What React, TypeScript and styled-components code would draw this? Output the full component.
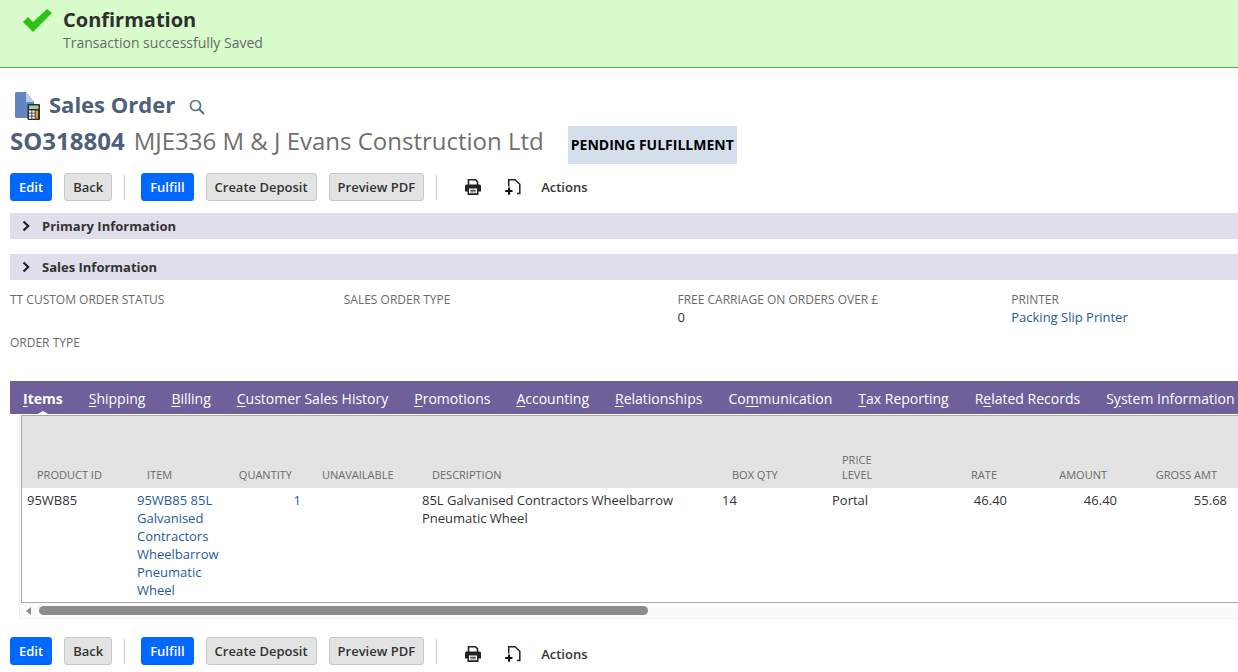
import React from "react";
import styled, { createGlobalStyle } from "styled-components";

const Global = createGlobalStyle`
  html, body { margin: 0; padding: 0; background: #fff; overflow: hidden; }
  body { font-family: "Open Sans", "Liberation Sans", sans-serif; font-size: 13px; color: #333; }
`;

const Page = styled.div`
  width: 1238px;
  height: 672px;
  overflow: hidden;
`;

const Banner = styled.div`
  height: 67px;
  background: #d8fccb;
  border-bottom: 1px solid #3dbb2c;
  display: flex;
  padding-left: 23px;
`;

const BannerIcon = styled.svg`
  width: 30px;
  height: 26px;
  margin-top: 8px;
  flex: none;
`;

const BannerText = styled.div`
  margin-left: 10px;
  padding-top: 8px;
`;

const BannerTitle = styled.div`
  font-size: 20px;
  line-height: 24px;
  font-weight: 700;
  color: #2f2f2f;
`;

const BannerSub = styled.div`
  font-size: 14px;
  line-height: 20px;
  margin-top: 1px;
  color: #6a6a6a;
`;

const Content = styled.div`
  padding-left: 10px;
`;

const TitleRow = styled.div`
  display: flex;
  align-items: center;
  height: 30px;
  margin-top: 21px;
  padding-left: 5px;
`;

const RecordIcon = styled.svg`
  width: 25px;
  height: 28px;
  margin-top: 4px;
  flex: none;
`;

const TitleText = styled.span`
  font-size: 22px;
  font-weight: 700;
  color: #4d5f7d;
  margin-left: 9px;
`;

const SearchIcon = styled.svg`
  width: 16px;
  height: 16px;
  margin-left: 14px;
  margin-top: 6px;
`;

const RecordRow = styled.div`
  display: flex;
  align-items: center;
  height: 38px;
  margin-top: 7px;
`;

const RecordId = styled.span`
  font-size: 24px;
  font-weight: 700;
  color: #4d5f7d;
  margin-bottom: 10px;
`;

const RecordName = styled.span`
  font-size: 24px;
  color: #6f6f6f;
  margin-left: 9px;
  margin-bottom: 10px;
`;

const Status = styled.span`
  margin-left: 24px;
  height: 38px;
  line-height: 38px;
  padding: 0 3px;
  background: #d5dfec;
  font-size: 14px;
  font-weight: 700;
  color: #000;
`;

const Toolbar = styled.div<{ $top: number }>`
  display: flex;
  align-items: center;
  height: 28px;
  margin-top: ${(p) => p.$top}px;
`;

const Btn = styled.button<{ $primary?: boolean; $gap?: number }>`
  height: 28px;
  box-sizing: border-box;
  padding: 0 8px;
  margin-left: ${(p) => p.$gap ?? 0}px;
  border-radius: 3px;
  font-family: inherit;
  font-size: 13px;
  font-weight: 600;
  cursor: pointer;
  border: 1px solid ${(p) => (p.$primary ? "#0067ff" : "#c8c8c8")};
  background: ${(p) => (p.$primary ? "#0067ff" : "#e3e3e3")};
  color: ${(p) => (p.$primary ? "#fff" : "#333")};
`;

const Divider = styled.div`
  width: 1px;
  height: 25px;
  background: #cfcfcf;
  margin-left: 12px;
  margin-right: 16px;
  flex: none;
`;

const ToolIcon = styled.svg<{ $gap: number; $drop: number }>`
  width: 18px;
  height: 18px;
  margin-left: ${(p) => p.$gap}px;
  margin-top: ${(p) => p.$drop * 2}px;
  flex: none;
`;

const ActionsLabel = styled.span<{ $drop: number }>`
  margin-left: 19px;
  margin-top: ${(p) => p.$drop * 2}px;
  font-size: 13px;
  font-weight: 600;
  color: #333;
`;

const Section = styled.div<{ $top: number }>`
  height: 26px;
  margin-top: ${(p) => p.$top}px;
  background: #e0deea;
  display: flex;
  align-items: center;
  padding-left: 11px;
  font-size: 13px;
  font-weight: 700;
  color: #333;
`;

const Chevron = styled.svg`
  width: 10px;
  height: 12px;
  margin-right: 11px;
`;

const Fields = styled.div`
  display: grid;
  grid-template-columns: repeat(4, 333.75px);
  grid-auto-rows: 43px;
  margin-top: 11px;
  height: 90px;
`;

const FieldLabel = styled.div`
  font-size: 12px;
  line-height: 18px;
  color: #6a6a6a;
`;

const FieldValue = styled.div<{ $link?: boolean }>`
  font-size: 13px;
  line-height: 18px;
  margin-top: -1px;
  color: ${(p) => (p.$link ? "#255a9b" : "#333")};
`;

const Tabs = styled.div`
  height: 33px;
  box-sizing: border-box;
  padding: 1px 0 0 13px;
  background: #6f5f9b;
  display: flex;
  align-items: center;
  white-space: nowrap;
  position: relative;
`;

const Tab = styled.span<{ $active?: boolean }>`
  font-size: 14px;
  color: #fff;
  font-weight: ${(p) => (p.$active ? 700 : 400)};
  margin-right: 26px;
  position: relative;
  u { text-underline-offset: 2px; }
  ${(p) =>
    p.$active
      ? `&::after {
          content: "";
          position: absolute;
          left: 50%;
          bottom: -7px;
          margin-left: -7px;
          border-left: 7px solid transparent;
          border-right: 7px solid transparent;
          border-bottom: 4px solid #fff;
        }`
      : ""}
`;

const TableWrap = styled.div`
  margin-left: 9px;
  margin-top: 1px;
  width: 1300px;
  height: 204px;
  box-sizing: border-box;
  background: #fbfbfb;
  border-bottom: 1px solid #eee;
  border-left: 1px solid #eee;
  padding-left: 2px;
`;

const TableBox = styled.div`
  margin-left: -1px;
  border: 1px solid #a9a9a9;
  height: 188px;
  box-sizing: border-box;
  overflow: hidden;
  background: #fff;
`;

const Table = styled.table`
  border-collapse: collapse;
  table-layout: fixed;
  width: 1291px;
`;

const Th = styled.th<{ $right?: number; $width: number }>`
  width: ${(p) => p.$width}px;
  height: 72px;
  box-sizing: border-box;
  background: #e3e3e3;
  vertical-align: bottom;
  font-size: 11px;
  line-height: 15px;
  font-weight: 400;
  color: #6a6a6a;
  text-align: ${(p) => (p.$right ? "right" : "left")};
  padding: 0 ${(p) => p.$right ?? 0}px 6px ${(p) => (p.$right ? 0 : 15)}px;
`;

const Td = styled.td<{ $right?: boolean; $link?: boolean }>`
  vertical-align: top;
  font-size: 13px;
  line-height: 18px;
  padding: 3px ${(p) => (p.$right ? 6 : 5)}px 0 5px;
  color: ${(p) => (p.$link ? "#255a9b" : "#333")};
  text-align: ${(p) => (p.$right ? "right" : "left")};
`;

const ScrollTrack = styled.div`
  height: 15px;
  display: flex;
  align-items: center;
  padding-left: 4px;
`;

const ScrollArrow = styled.div`
  border-top: 4px solid transparent;
  border-bottom: 4px solid transparent;
  border-right: 5px solid #8c8c8c;
`;

const ScrollThumb = styled.div`
  width: 609px;
  height: 9px;
  margin-left: 8px;
  border-radius: 5px;
  background: #8c8c8c;
`;

const Printer = () => (
  <>
    <path d="M4.500 7.500V1.800h7l2 2v3.700" fill="none" stroke="#222" strokeWidth="1.600" />
    <path fillRule="evenodd" d="M2.500 6.500h13a1.500 1.500 0 0 1 1.500 1.500v5.500h-2.500V17h-11v-3.500H1V8a1.500 1.500 0 0 1 1.500-1.500zM5 10.500V15.300h8v-4.800zM6.200 11.800h5.600v.9H6.200zm0 1.600h5.600v.9H6.200z" fill="#222" />
  </>
);

const NewDoc = () => (
  <>
    <path d="M4.700 8.500V1.800H11L15.800 6.300V15.500H13" fill="none" stroke="#222" strokeWidth="1.500" />
    <path d="M4 8.500h2.100v2.400H8.500v2.100H6.100v2.700H4V13H1.200v-2.100H4z" transform="translate(0 1)" fill="#111" />
  </>
);

const Bar: React.FC<{ top: number; drop: number }> = ({ top, drop }) => (
  <Toolbar $top={top}>
    <Btn $primary>Edit</Btn>
    <Btn $gap={12}>Back</Btn>
    <Divider />
    <Btn $primary>Fulfill</Btn>
    <Btn $gap={12}>Create Deposit</Btn>
    <Btn $gap={12}>Preview PDF</Btn>
    <Divider />
    <ToolIcon $gap={11} $drop={drop} viewBox="0 0 18 18"><Printer /></ToolIcon>
    <ToolIcon $gap={22} $drop={drop} viewBox="0 0 18 18"><NewDoc /></ToolIcon>
    <ActionsLabel $drop={drop}>Actions</ActionsLabel>
  </Toolbar>
);

const tabs: [string, string, string, boolean?][] = [
  ["", "I", "tems", true],
  ["", "S", "hipping"],
  ["", "B", "illing"],
  ["", "C", "ustomer Sales History"],
  ["", "P", "romotions"],
  ["", "A", "ccounting"],
  ["", "R", "elationships"],
  ["Co", "m", "munication"],
  ["", "T", "ax Reporting"],
  ["R", "e", "lated Records"],
  ["S", "y", "stem Information"],
];

const SectionHeader: React.FC<{ top: number; label: string }> = ({ top, label }) => (
  <Section $top={top}>
    <Chevron viewBox="0 0 10 12">
      <path d="M2.500 1.500L7.200 6l-4.700 4.500" fill="none" stroke="#222" strokeWidth="2.200" />
    </Chevron>
    {label}
  </Section>
);

export default function App() {
  return (
    <Page>
      <Global />
      <Banner>
        <BannerIcon viewBox="0 0 30 26">
          <path d="M0 14l5-5 5 5L24 1l5 4L10 24z" fill="#2cc414" />
        </BannerIcon>
        <BannerText>
          <BannerTitle>Confirmation</BannerTitle>
          <BannerSub>Transaction successfully Saved</BannerSub>
        </BannerText>
      </Banner>
      <Content>
        <TitleRow>
          <RecordIcon viewBox="0 0 25 28">
            <path d="M1.500 0H11l8 10v16H1.500A1.500 1.500 0 0 1 0 24.500V1.500A1.500 1.500 0 0 1 1.500 0z" fill="#6286c0" />
            <path d="M11 0l8 10h-8z" fill="#b9cbe6" />
            <rect x="12.500" y="12" width="12.500" height="16" rx="1" fill="#2e2e2e" />
            <rect x="14" y="13.500" width="9.500" height="3.500" fill="#a6cf9f" />
            <g fill="#fff">
              <rect x="14" y="18.500" width="2.400" height="2.200" />
              <rect x="17.300" y="18.500" width="2.400" height="2.200" />
              <rect x="14" y="21.500" width="2.400" height="2.200" />
              <rect x="17.300" y="21.500" width="2.400" height="2.200" />
              <rect x="14" y="24.500" width="2.400" height="2.200" />
              <rect x="17.300" y="24.500" width="2.400" height="2.200" />
            </g>
            <rect x="20.600" y="18.500" width="2.400" height="8.200" fill="#e59a3c" />
          </RecordIcon>
          <TitleText>Sales Order</TitleText>
          <SearchIcon viewBox="0 0 16 16">
            <circle cx="6.500" cy="6.500" r="5" fill="none" stroke="#5a6f92" strokeWidth="1.700" />
            <path d="M10.200 10.200L15 15" stroke="#5a6f92" strokeWidth="2" />
          </SearchIcon>
        </TitleRow>
        <RecordRow>
          <RecordId>SO318804</RecordId>
          <RecordName>MJE336 M &amp; J Evans Construction Ltd</RecordName>
          <Status>PENDING FULFILLMENT</Status>
        </RecordRow>
        <Bar top={9} drop={0} />
        <SectionHeader top={12} label="Primary Information" />
        <SectionHeader top={15} label="Sales Information" />
        <Fields>
          <div><FieldLabel>TT CUSTOM ORDER STATUS</FieldLabel></div>
          <div><FieldLabel>SALES ORDER TYPE</FieldLabel></div>
          <div><FieldLabel>FREE CARRIAGE ON ORDERS OVER £</FieldLabel><FieldValue>0</FieldValue></div>
          <div><FieldLabel>PRINTER</FieldLabel><FieldValue $link>Packing Slip Printer</FieldValue></div>
          <div><FieldLabel>ORDER TYPE</FieldLabel></div>
        </Fields>
        <Tabs>
          {tabs.map(([a, b, c, active]) => (
            <Tab key={b + c} $active={active}>{a}<u>{b}</u>{c}</Tab>
          ))}
        </Tabs>
        <TableWrap>
          <TableBox>
            <Table>
              <thead>
                <tr>
                  <Th $width={110}>PRODUCT ID</Th>
                  <Th $width={91}>ITEM</Th>
                  <Th $width={84} $right={15}>QUANTITY</Th>
                  <Th $width={110}>UNAVAILABLE</Th>
                  <Th $width={300}>DESCRIPTION</Th>
                  <Th $width={110}>BOX QTY</Th>
                  <Th $width={76}>PRICE<br />LEVEL</Th>
                  <Th $width={110} $right={16}>RATE</Th>
                  <Th $width={110} $right={16}>AMOUNT</Th>
                  <Th $width={110} $right={16}>GROSS AMT</Th>
                  <Th $width={80} />
                </tr>
              </thead>
              <tbody>
                <tr>
                  <Td>95WB85</Td>
                  <Td $link>95WB85 85L Galvanised Contractors Wheelbarrow Pneumatic Wheel</Td>
                  <Td $right $link>1</Td>
                  <Td />
                  <Td>85L Galvanised Contractors Wheelbarrow Pneumatic Wheel</Td>
                  <Td>14</Td>
                  <Td>Portal</Td>
                  <Td $right>46.40</Td>
                  <Td $right>46.40</Td>
                  <Td $right>55.68</Td>
                  <Td />
                </tr>
              </tbody>
            </Table>
          </TableBox>
          <ScrollTrack>
            <ScrollArrow />
            <ScrollThumb />
          </ScrollTrack>
        </TableWrap>
        <Bar top={18} drop={3} />
      </Content>
    </Page>
  );
}
